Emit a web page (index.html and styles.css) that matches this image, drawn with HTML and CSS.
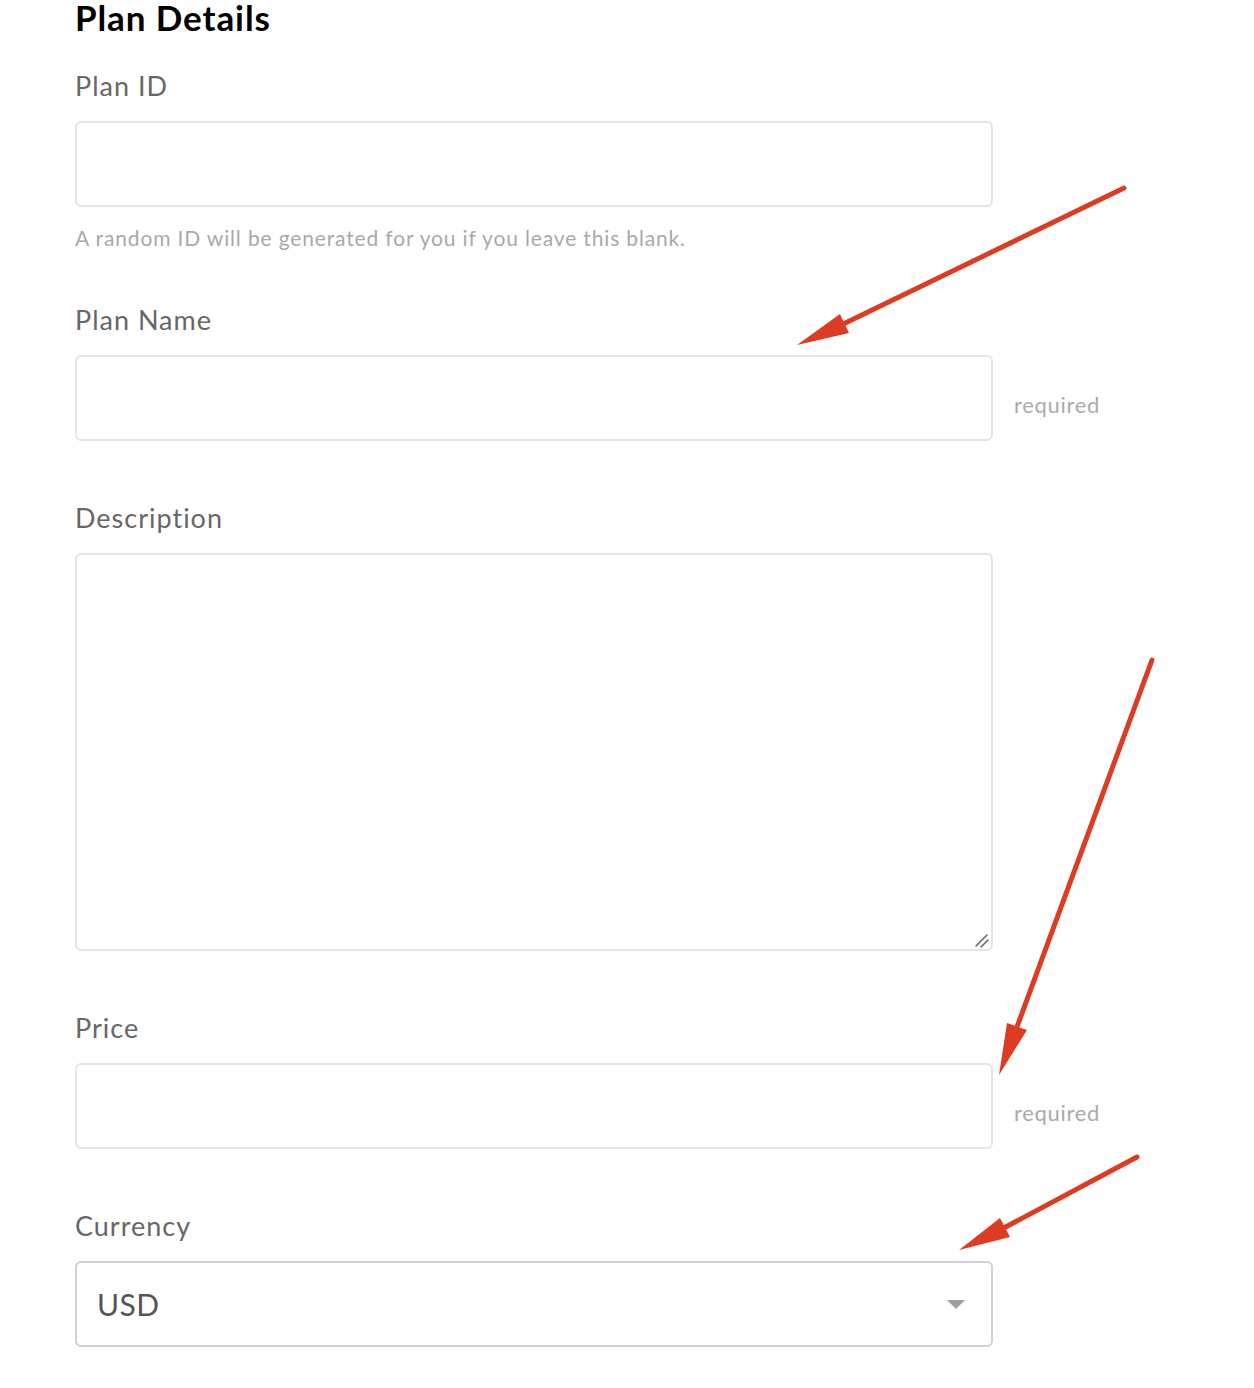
FILE: index.html
```html
<!DOCTYPE html>
<html>
<head>
<meta charset="utf-8">
<link rel="stylesheet" href="styles.css">
</head>
<body>
<div class="page">
  <h1 class="title">Plan Details</h1>

  <div class="group">
    <label class="label">Plan ID</label>
    <div class="row"><input class="field" type="text"></div>
    <p class="help">A random ID will be generated for you if you leave this blank.</p>
  </div>

  <div class="group">
    <label class="label">Plan Name</label>
    <div class="row"><input class="field" type="text"><span class="req">required</span></div>
  </div>

  <div class="group">
    <label class="label">Description</label>
    <div class="row">
      <div class="area-wrap">
        <textarea class="field area"></textarea>
        <svg class="grip" width="16" height="16" viewBox="0 0 16 16">
          <g stroke="#666" stroke-width="1.6" stroke-linecap="round">
            <line x1="2" y1="13" x2="13" y2="2"/>
            <line x1="7" y1="14" x2="14" y2="7"/>
          </g>
        </svg>
      </div>
    </div>
  </div>

  <div class="group">
    <label class="label">Price</label>
    <div class="row"><input class="field" type="text"><span class="req">required</span></div>
  </div>

  <div class="group">
    <label class="label">Currency</label>
    <div class="row">
      <div class="select-wrap">
        <select class="field select"><option>USD</option></select>
        <span class="caret"></span>
      </div>
    </div>
  </div>

  <svg class="arrows" width="1254" height="1388" viewBox="0 0 1254 1388">
    <g stroke="#dc3c22" stroke-width="5" stroke-linecap="round" fill="none">
      <line x1="1124" y1="188" x2="835" y2="328"/>
      <line x1="1152" y1="660" x2="1014" y2="1035"/>
      <line x1="1137" y1="1157" x2="1000" y2="1230"/>
    </g>
    <g fill="#dc3c22">
      <polygon points="797,345 840,314 849,333"/>
      <polygon points="999,1075 1007,1023 1027,1030"/>
      <polygon points="959,1250 1000,1218 1010,1237"/>
    </g>
  </svg>
</div>
</body>
</html>
```

FILE: styles.css
```css
html, body {
  margin: 0;
  padding: 0;
  background: #fff;
}
.page {
  position: relative;
  width: 1254px;
  min-height: 1388px;
  padding-left: 75px;
  box-sizing: border-box;
  font-family: Lato, "Open Sans", sans-serif;
}
.title {
  margin: 0 0 34px;
  font-size: 35px;
  line-height: 34px;
  font-weight: 700;
  letter-spacing: 0.9px;
  color: #000;
}
.group {
  margin-bottom: 59px;
}
.label {
  display: block;
  font-size: 27px;
  line-height: 36px;
  letter-spacing: 1px;
  color: #676767;
  margin-bottom: 17px;
}
.row {
  display: flex;
  align-items: center;
  gap: 21px;
}
.field {
  display: block;
  width: 918px;
  height: 86px;
  box-sizing: border-box;
  border: 2px solid #e5e5e5;
  border-radius: 6px;
  background: #fff;
  margin: 0;
  padding: 0 20px;
  font-family: inherit;
  outline: none;
}
.area-wrap {
  position: relative;
}
.area {
  height: 398px;
  resize: none;
}
.grip {
  position: absolute;
  right: 3px;
  bottom: 2px;
}
.help {
  margin: 21px 0 -5px;
  font-size: 21px;
  line-height: 20px;
  letter-spacing: 0.85px;
  color: #a9a9a9;
}
.req {
  font-size: 22px;
  letter-spacing: 0.7px;
  color: #aaa;
  margin-top: 12px;
}
.select-wrap {
  position: relative;
}
.select {
  -webkit-appearance: none;
  appearance: none;
  border-color: #d2d2d2;
  font-size: 30px;
  letter-spacing: 0.5px;
  color: #555;
}
.caret {
  position: absolute;
  right: 28px;
  top: 39px;
  width: 0;
  height: 0;
  border-left: 9.5px solid transparent;
  border-right: 9.5px solid transparent;
  border-top: 9px solid #9e9e9e;
}
.arrows {
  position: absolute;
  left: 0;
  top: 0;
  pointer-events: none;
}
```
